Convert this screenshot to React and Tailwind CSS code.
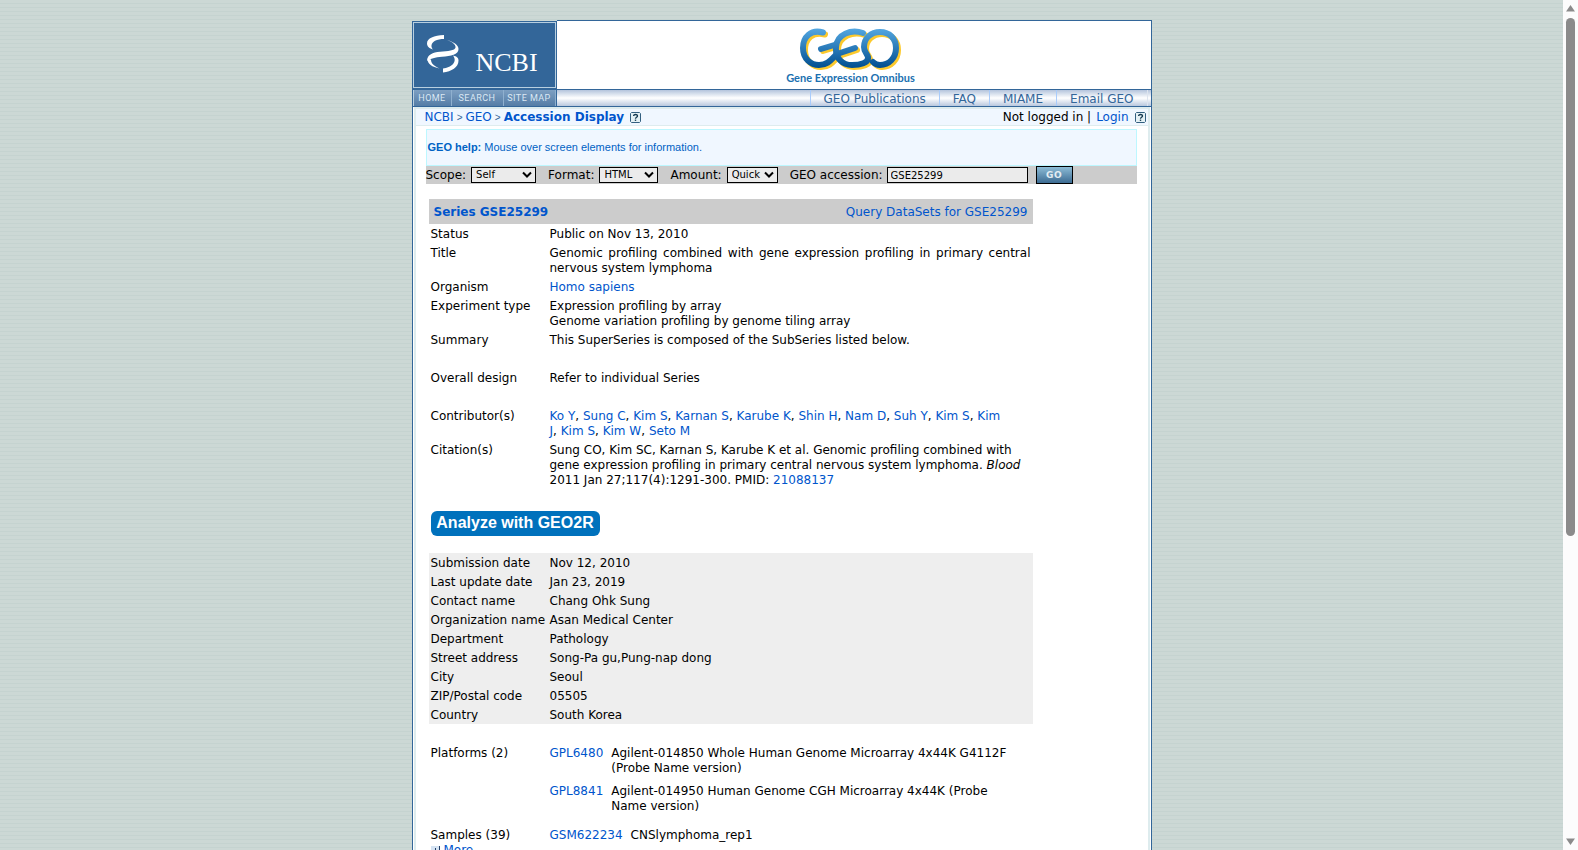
import React from 'react';

const navLinks = ['GEO Publications', 'FAQ', 'MIAME', 'Email GEO'];

const contributors = ['Ko Y', 'Sung C', 'Kim S', 'Karnan S', 'Karube K', 'Shin H', 'Nam D', 'Suh Y', 'Kim S', 'Kim J', 'Kim S', 'Kim W', 'Seto M'];

const contactRows = [
  ['Submission date', 'Nov 12, 2010'],
  ['Last update date', 'Jan 23, 2019'],
  ['Contact name', 'Chang Ohk Sung'],
  ['Organization name', 'Asan Medical Center'],
  ['Department', 'Pathology'],
  ['Street address', 'Song-Pa gu,Pung-nap dong'],
  ['City', 'Seoul'],
  ['ZIP/Postal code', '05505'],
  ['Country', 'South Korea'],
];

const platforms = [
  ['GPL6480', 'Agilent-014850 Whole Human Genome Microarray 4x44K G4112F (Probe Name version)'],
  ['GPL8841', 'Agilent-014950 Human Genome CGH Microarray 4x44K (Probe Name version)'],
];

function Link({ children, className = '' }) {
  return <a href="#" className={`text-[#0055cc] ${className}`}>{children}</a>;
}

function HelpIcon() {
  return (
    <svg width="11" height="11" viewBox="0 0 11 11" aria-label="Help">
      <path d="M1.5 .5h8l1 1v8l-1 1h-8l-1-1v-8z" fill="#e4f1f5" stroke="#336080" />
      <path d="M3.6 4C3.600 2 7.500 2 7.500 4C7.500 5.300 5.500 5.300 5.500 6.800" fill="none" stroke="#12384f" strokeWidth="1.3" />
      <path d="M4.800 7.600h1.400v1.300H4.800z" fill="#12384f" />
    </svg>
  );
}

function NcbiMark() {
  return (
    <svg width="32" height="38" viewBox="0 0 32 38" fill="#fff" aria-hidden="true">
      <path d="M17 0C7 .5 0 3 0 8.500C0 11.500 2.500 13.500 6 14.500C3.500 12 4 8 8 5.800C10.500 4.500 13.500 4 17 4z" />
      <path d="M20 5C27 7 31.500 10 31.500 14C31.500 19.500 24 21 15 21.800C8 22.400 3.500 23.500 .5 26C-.5 20.500 5 17.500 13 16.800C21 16 28 15.800 28.500 12.500C28.800 9.500 25.500 7 20 5z" />
      <path d="M.3 23.500C.5 29 5 32 12.500 33.500C7 31 4 28.500 4 24.500z" />
      <path d="M26 20.500C30 21.500 31.500 23 31.500 25.500C31.500 32.500 24.500 36.500 16 37.500V33.500C24 32.800 31 27 26 20.500z" />
    </svg>
  );
}

function GeoLogo() {
  const letters = (
    <>
      <path d="M24 4.500C12 1 4 9 4 20C4 31 12 37 20 37C30 37 33 30 38 26L56 20" />
      <path d="M22 21L37 16.500" />
      <path d="M64 5C52 1 38 6 37 19C36 31 44 37 53 37C61 37 70 35 69 29C68 25 65 24 65 19C65 10 72 4 81 4C91 4 97 11 97 20C97 30 90 37 81 37C77 37 76 36 74 34" />
    </>
  );
  return (
    <svg width="103" height="43" viewBox="0 0 103 43" aria-label="GEO">
      <defs>
        <linearGradient id="geoBlue" gradientUnits="userSpaceOnUse" x1="0" y1="0" x2="0" y2="40">
          <stop offset="0" stopColor="#55a8e2" />
          <stop offset="1" stopColor="#004e90" />
        </linearGradient>
      </defs>
      <g fill="none" strokeLinecap="round" strokeLinejoin="round" strokeWidth="6">
        <g stroke="#fcc92c" transform="translate(2 2)">{letters}</g>
        <g stroke="url(#geoBlue)">{letters}</g>
      </g>
    </svg>
  );
}

function Row({ label, children, className = '' }) {
  return (
    <tr className={`align-top ${className}`}>
      <th scope="row" className="px-[2px] pt-[3px] pb-px text-left font-normal whitespace-nowrap">{label}</th>
      <td className="px-[2px] pt-[3px] pb-px">{children}</td>
    </tr>
  );
}

function Columns() {
  return (
    <colgroup>
      <col className="w-[119px]" />
      <col />
    </colgroup>
  );
}

function Picker({ id, label, value, className }) {
  return (
    <div className="mr-3 flex items-center">
      <label htmlFor={id}>{label}</label>
      <div className={`relative ml-[5px] ${className}`}>
        <select id={id} defaultValue={value} className="block h-4 w-full appearance-none border border-black bg-[#ebebeb] pl-1 text-[10px] leading-[14px] outline-none">
          <option>{value}</option>
        </select>
        <svg className="pointer-events-none absolute top-1 right-1" width="10" height="8" viewBox="0 0 10 8" aria-hidden="true">
          <path d="M1 1.500L5 5.500L9 1.500" fill="none" stroke="#000" strokeWidth="2" />
        </svg>
      </div>
    </div>
  );
}

function Header() {
  return (
    <header className="text-[#336699]">
      <div className="flex h-[69px]">
        <div className="mt-px w-[145px] border border-b-0 border-[#336699] bg-[#336699] pb-px">
          <div className="flex h-full items-start border border-[#b8cfe0] pt-3 pl-[13px]">
            <NcbiMark />
            <span className="mt-3 ml-[17px] font-['Liberation_Serif',serif] text-[26px] leading-8 text-white">NCBI</span>
          </div>
        </div>
        <div className="flex flex-1 flex-col items-center border-t border-r border-[#336699] bg-white pt-[7px] pr-[6px]">
          <GeoLogo />
          <span className="font-['Lato',sans-serif] text-[11px] leading-[14px] font-bold text-[#1a70b0]">Gene Expression Omnibus</span>
        </div>
      </div>
      <div className="flex h-[18px] border border-[#336699]">
        <nav className="flex w-[144px] border-r border-[#336699] bg-linear-to-b from-[#7d9fc2] to-[#557da6] text-center font-['Roboto',sans-serif] text-[9px] leading-4 tracking-wider text-[#dbe8f4]">
          <a href="#" className="w-[38px] border-l border-[#b8cfe0]">HOME</a>
          <a href="#" className="w-[52px] border-l border-[#8fb0cf]">SEARCH</a>
          <a href="#" className="flex-1 border-x border-[#8fb0cf] whitespace-nowrap">SITE MAP</a>
        </nav>
        <nav className="flex flex-1 justify-end bg-linear-to-b from-[#b4c4dc] via-white to-[#b9c8de] leading-[18px]">
          {navLinks.map((item) => (
            <a key={item} href="#" className="border-l border-[#a9ccfb] px-[13px]">{item}</a>
          ))}
          <span className="w-1 border-l border-[#dde4ee]" />
        </nav>
      </div>
    </header>
  );
}

function Crumb({ children }) {
  return (
    <>
      <Link>{children}</Link>
      <span className="font-['Liberation_Sans',Arial,sans-serif] text-[10px] text-[#336699]">&gt;</span>
    </>
  );
}

function QueryForm() {
  return (
    <form className="flex h-[18px] items-center bg-[#cccccc]" onSubmit={(e) => e.preventDefault()}>
      <Picker id="scope" label="Scope:" value="Self" className="w-[65px]" />
      <Picker id="format" label="Format:" value="HTML" className="w-[59px]" />
      <Picker id="amount" label="Amount:" value="Quick" className="w-[51px]" />
      <label htmlFor="acc">GEO accession:</label>
      <input id="acc" defaultValue="GSE25299" className="ml-1 h-4 w-[141px] border border-black bg-[#ebebeb] px-[3px] text-[10px] outline-none" />
      <button className="ml-2 h-[18px] w-[37px] border border-black bg-linear-to-b from-[#8dbcd6] to-[#3d6c93] text-[9px] leading-4 font-bold tracking-wider text-[#e3edf3]">GO</button>
    </form>
  );
}

function Record() {
  return (
    <div className="mt-[15px] ml-[3px] w-[604px]">
      <div className="flex h-[25px] items-center justify-between bg-[#cccccc] px-[5px] pt-px">
        <Link className="font-bold">Series GSE25299</Link>
        <Link>Query DataSets for GSE25299</Link>
      </div>
      <table className="w-full table-fixed">
        <Columns />
        <tbody>
          <Row label="Status">Public on Nov 13, 2010</Row>
          <Row label="Title"><p className="text-justify">Genomic profiling combined with gene expression profiling in primary central nervous system lymphoma</p></Row>
          <Row label="Organism"><Link>Homo sapiens</Link></Row>
          <Row label="Experiment type">Expression profiling by array<br />Genome variation profiling by genome tiling array</Row>
          <Row label="Summary"><p className="mb-[19px]">This SuperSeries is composed of the SubSeries listed below.</p></Row>
          <Row label="Overall design"><p className="mb-[19px]">Refer to individual Series</p></Row>
          <Row label="Contributor(s)">
            <p className="pr-6">
              {contributors.map((name, i) => (
                <React.Fragment key={i}>{i > 0 && ', '}<Link>{name}</Link></React.Fragment>
              ))}
            </p>
          </Row>
          <Row label="Citation(s)">
            Sung CO, Kim SC, Karnan S, Karube K et al. Genomic profiling combined with gene expression profiling in primary central nervous system lymphoma. <i>Blood</i> 2011 Jan 27;117(4):1291-300. PMID: <Link>21088137</Link>
          </Row>
        </tbody>
      </table>
      <a href="#" className="mt-[22px] mb-[17px] ml-[2px] block h-[25px] w-[169px] rounded-md bg-[#0071bc] text-center font-['Liberation_Sans',Arial,sans-serif] text-[16px] leading-[23px] font-bold text-white">Analyze with GEO2R</a>
      <table className="w-full table-fixed bg-[#eeeeee]">
        <Columns />
        <tbody>
          {contactRows.map(([label, value]) => <Row key={label} label={label}>{value}</Row>)}
        </tbody>
      </table>
      <table className="mt-[19px] w-full table-fixed">
        <Columns />
        <tbody>
          <Row label="Platforms (2)">
            {platforms.map(([id, title]) => (
              <div key={id} className="mb-2 flex gap-2 pr-4">
                <Link>{id}</Link>
                <span>{title}</span>
              </div>
            ))}
          </Row>
          <Row label={
            <div className="pt-[2px]">
              Samples (39)
              <div className="flex items-center gap-1">
                <svg width="9" height="9" viewBox="0 0 9 9" aria-hidden="true">
                  <path d="M0 0h9v9H0z" fill="#d5e3f2" />
                  <path d="M8.500 0v9M0 8.500h9M4.500 2v5M2 4.500h5" stroke="#24406a" />
                </svg>
                <Link>More...</Link>
              </div>
            </div>
          }>
            <div className="flex gap-2 pt-[2px]">
              <Link>GSM622234</Link>
              <span>CNSlymphoma_rep1</span>
            </div>
          </Row>
        </tbody>
      </table>
    </div>
  );
}

function ScrollRail() {
  return (
    <div className="flex w-[15px] flex-col items-center bg-[#fcfcfc] py-1" aria-hidden="true">
      <svg width="9" height="8" viewBox="0 0 9 8" fill="#8b8b8b"><path d="M4.500 1L9 7.500H0z" /></svg>
      <div className="mt-[6px] h-[61.5%] w-[9px] rounded-full bg-[#8b8b8b]" />
      <svg className="mt-auto" width="9" height="8" viewBox="0 0 9 8" fill="#8b8b8b"><path d="M4.500 7L9 .5H0z" /></svg>
    </div>
  );
}

export default function App() {
  return (
    <div className="flex h-screen font-['DejaVu_Sans',Verdana,sans-serif] text-[12px] leading-[15px] text-black">
      <div className="flex-1 overflow-hidden bg-[repeating-linear-gradient(#ccd8d5_0px,#ccd8d5_3px,#c5d3d0_3px,#c5d3d0_4px)] pt-5">
        <div className="mx-auto max-w-[740px]">
          <Header />
          <main className="border-x border-[#336699] bg-white px-px">
            <div className="border-x-2 border-t-2 border-[#deecee] pb-10">
              <div className="flex h-[17px] items-center justify-between border-b border-[#deecee] bg-[#f0f7ff] pt-px pr-[2px] pl-[9px]">
                <div className="flex items-center gap-[3px]">
                  <Crumb>NCBI</Crumb>
                  <Crumb>GEO</Crumb>
                  <Link className="mr-[3px] font-bold">Accession Display</Link>
                  <HelpIcon />
                </div>
                <div className="flex items-center gap-[5px]">
                  <span>Not logged in |</span>
                  <Link className="mr-px">Login</Link>
                  <HelpIcon />
                </div>
              </div>
              <div className="mt-[3px] mr-[11px] ml-[10px]">
                <p className="h-[37px] border border-[#bdf7ff] bg-[#f0f7ff] pl-px font-['Liberation_Sans',Arial,sans-serif] text-[11px] leading-[35px] text-[#0062c4]">
                  <b>GEO help:</b> Mouse over screen elements for information.
                </p>
                <QueryForm />
                <Record />
              </div>
            </div>
          </main>
        </div>
      </div>
      <ScrollRail />
    </div>
  );
}
